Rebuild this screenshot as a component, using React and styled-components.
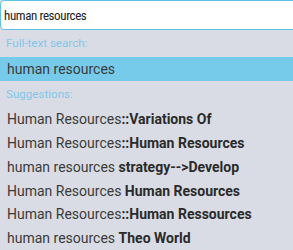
import React from "react";
import styled, { createGlobalStyle } from "styled-components";

const Global = createGlobalStyle`
  html, body { margin: 0; padding: 0; background: #d9dce4; overflow: hidden; }
  body { font-family: "Roboto", "Liberation Sans", sans-serif; }
  input { font: inherit; }
`;

const Wrap = styled.div`
  width: 293px;
  height: 250px;
  display: flex;
  flex-direction: column;
  background: #d9dce4;
  overflow: hidden;
`;

const Input = styled.input`
  box-sizing: border-box;
  width: 300px;
  height: 30px;
  margin: 0;
  border: 1px solid #5fc2e8;
  border-radius: 4px;
  padding: 0 3px;
  font-family: "Roboto Condensed", "Roboto", sans-serif;
  font-stretch: 75%;
  font-size: 13px;
  letter-spacing: -0.4px;
  font-weight: 400;
  color: #222;
  background: #fff;
  outline: none;
  flex: none;
`;

const Label = styled.div`
  height: 27px;
  display: flex;
  align-items: center;
  padding-left: 6px;
  font-size: 11.6px;
  color: #7fc7ea;
`;

const Item = styled.div`
  height: 24px;
  display: flex;
  align-items: center;
  padding-left: 7px;
  font-size: 14px;
  color: #3a3a3a;
  white-space: pre;
  background: ${(p) => (p.$active ? "#77cbea" : "transparent")};
`;

const Strong = styled.span`
  font-weight: 700;
  color: #2a2a2a;
`;

const items = [
  ["Human Resources", "::Variations Of"],
  ["Human Resources", "::Human Resources"],
  ["human resources ", "strategy-->Develop"],
  ["Human Resources ", "Human Resources"],
  ["Human Resources", "::Human Ressources"],
  ["human resources ", "Theo World"],
];

export default function App() {
  return (
    <Wrap>
      <Global />
      <Input defaultValue="human resources" />
      <Label>Full-text search:</Label>
      <Item $active>human resources</Item>
      <Label>Suggestions:</Label>
      {items.map(([a, b], i) => (
        <Item key={i}>
          <span>{a}</span>
          <Strong>{b}</Strong>
        </Item>
      ))}
    </Wrap>
  );
}
